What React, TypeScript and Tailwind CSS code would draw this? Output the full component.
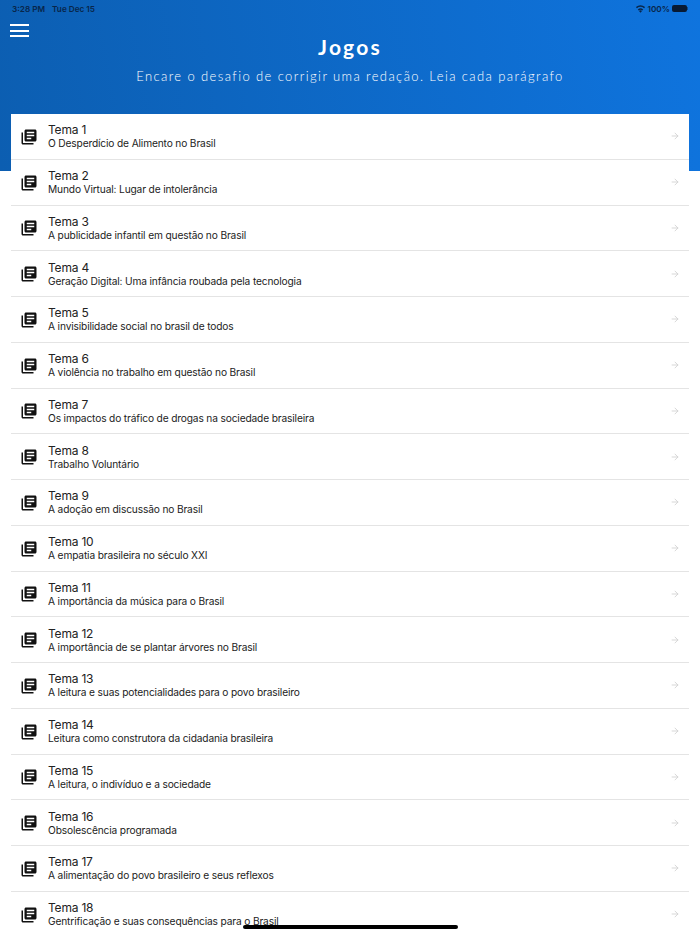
import { ArrowRight } from 'lucide-react';

const temas = [
  'O Desperdício de Alimento no Brasil',
  'Mundo Virtual: Lugar de intolerância',
  'A publicidade infantil em questão no Brasil',
  'Geração Digital: Uma infância roubada pela tecnologia',
  'A invisibilidade social no brasil de todos',
  'A violência no trabalho em questão no Brasil',
  'Os impactos do tráfico de drogas na sociedade brasileira',
  'Trabalho Voluntário',
  'A adoção em discussão no Brasil',
  'A empatia brasileira no século XXI',
  'A importância da música para o Brasil',
  'A importância de se plantar árvores no Brasil',
  'A leitura e suas potencialidades para o povo brasileiro',
  'Leitura como construtora da cidadania brasileira',
  'A leitura, o indivíduo e a sociedade',
  'Obsolescência programada',
  'A alimentação do povo brasileiro e seus reflexos',
  'Gentrificação e suas consequências para o Brasil',
];

function BooksIcon() {
  return (
    <svg viewBox="0 0 24 24" className="mt-px h-[18px] w-[18px] shrink-0 fill-[#111]">
      <path d="M4 6H2v14c0 1.1.9 2 2 2h14v-2H4V6zm16-4H8c-1.1 0-2 .9-2 2v12c0 1.1.9 2 2 2h12c1.1 0 2-.9 2-2V4c0-1.1-.9-2-2-2zm-1 9H9V9h10v2zm-4 4H9v-2h6v2zm4-8H9V5h10v2z" />
    </svg>
  );
}

function StatusBar() {
  return (
    <div className="flex h-4 items-center justify-between pl-3 pr-3 pt-0.5 text-[8.200px] font-semibold text-[#08264a]">
      <div className="flex gap-[7px]">
        <span>3:28 PM</span>
        <span>Tue Dec 15</span>
      </div>
      <div className="flex items-center gap-[2px]">
        <svg viewBox="0 0 24 24" className="h-[10px] w-[11px] fill-[#08264a]">
          <path d="M12 21l3.6-4.5a5.8 5.8 0 0 0-7.2 0L12 21zM5.6 13l2 2.5a7 7 0 0 1 8.8 0l2-2.5a10.2 10.2 0 0 0-12.8 0zM1 7.300l2.400 3a13.700 13.700 0 0 1 17.200 0l2.400-3a17.500 17.500 0 0 0-22 0z" />
        </svg>
        <span>100%</span>
        <div className="flex items-center">
          <div className="h-[7px] w-[15px] rounded-[2px] bg-[#081a33]" />
          <div className="h-[3px] w-px bg-[#0b2a50]/60" />
        </div>
      </div>
    </div>
  );
}

export default function App() {
  return (
    <div className="relative h-[934px] w-[700px] overflow-hidden bg-white font-['Inter',sans-serif]">
      <header className="h-[171px] bg-[linear-gradient(80deg,#0c5eb1,#0f74de)]">
        <StatusBar />
        <div className="px-[10px] pt-2">
          <div className="flex w-[19px] flex-col gap-[3.500px]">
            <div className="h-0.5 bg-white" />
            <div className="h-0.5 bg-white" />
            <div className="h-0.5 bg-white" />
          </div>
        </div>
        <div className="-mt-[4px] text-center font-['Lato',sans-serif] text-white">
          <h1 className="text-[21px] leading-7 font-bold tracking-[2.2px]">Jogos</h1>
          <p className="mt-[5px] text-[13px] leading-5 font-light tracking-[1.400px] text-white">
            Encare o desafio de corrigir uma redação. Leia cada parágrafo
          </p>
        </div>
      </header>

      <ul className="mx-[11px] -mt-[56.900px] bg-white">
        {temas.map((descricao, i) => (
          <li
            key={i}
            className="flex h-[45.75px] items-center border-b border-[#e4e4e4] pl-[9px] pr-[9px]"
          >
            <BooksIcon />
            <div className="ml-[10px] flex-1">
              <div className="text-[12px] leading-[15px] tracking-[-0.2px] text-[#222]">Tema {i + 1}</div>
              <div className="text-[10.200px] leading-[13px] tracking-[-0.15px] text-[#222]">{descricao}</div>
            </div>
            <ArrowRight size={10} className="text-[#cfcfcf]" />
          </li>
        ))}
      </ul>

      <div className="absolute bottom-[5px] left-[243px] h-1 w-[215px] rounded-full bg-black" />
    </div>
  );
}
